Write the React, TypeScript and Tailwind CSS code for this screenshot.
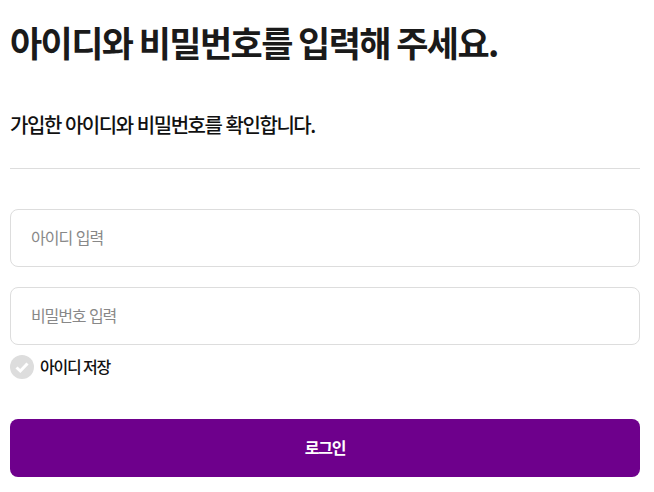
export default function App() {
  return (
    <div className="w-[654px] h-[492px] bg-white px-[10px] overflow-hidden text-[#111]" style={{ fontFamily: '"Noto Sans CJK KR", sans-serif' }}>
      <h1 className="pt-[17px] text-[35px] leading-[50px] font-bold tracking-[-1.6px] text-[#1a1a1a]">아이디와 비밀번호를 입력해 주세요.</h1>
      <p className="mt-[44px] text-[20px] leading-[28px] font-medium tracking-[-1.45px] [word-spacing:1px] text-[#111]">가입한 아이디와 비밀번호를 확인합니다.</p>
      <div className="mt-[29px] h-px w-[630px] bg-[#dddddd]" />
      <div className="mt-[40px] flex flex-col gap-[20px] w-[630px]">
        <div className="h-[58px] rounded-[8px] border border-[#dddddd] px-[20px] pb-[2px] flex items-center text-[16px] tracking-[-1px] [word-spacing:1px] text-[#888]">아이디 입력</div>
        <div className="h-[58px] rounded-[8px] border border-[#dddddd] px-[20px] pb-[2px] flex items-center text-[16px] tracking-[-1.1px] [word-spacing:1px] text-[#888]">비밀번호 입력</div>
      </div>
      <div className="mt-[10px] flex items-center gap-[6px] h-[24px]">
        <svg width="24" height="24" viewBox="0 0 24 24"><circle cx="12" cy="12" r="12" fill="#dddddd" /><path d="M6.5 12.5l3.8 3.5L17.5 8.5" fill="none" stroke="#fff" strokeWidth="3" /></svg>
        <span className="text-[16px] font-medium tracking-[-1.2px] pb-[2px]">아이디 저장</span>
      </div>
      <button className="mt-[40px] w-[630px] h-[58px] rounded-[8px] bg-[#6e008c] text-white text-[16px] font-bold tracking-[-1.2px] pb-[2px]">로그인</button>
    </div>
  );
}
